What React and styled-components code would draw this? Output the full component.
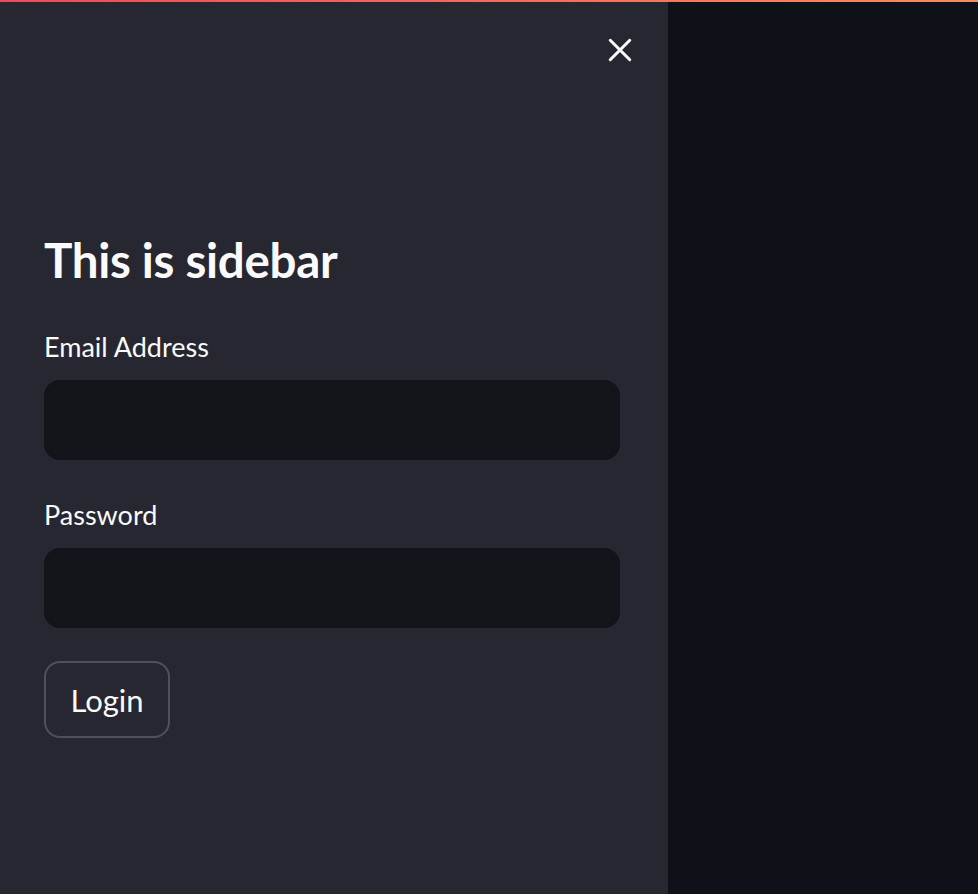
import React from "react";
import styled, { createGlobalStyle } from "styled-components";

const Global = createGlobalStyle`
  html, body { margin: 0; padding: 0; background: #0e1117; }
  body { font-family: "Lato", "Noto Sans", sans-serif; }
  #root { height: 894px; }
`;

const Page = styled.div`
  position: relative;
  display: flex;
  width: 978px;
  height: 894px;
  background: #0e1117;
  overflow: hidden;
`;

const Decoration = styled.div`
  position: absolute;
  top: 0;
  left: 0;
  right: 0;
  height: 2px;
  background: linear-gradient(90deg, #f04b55 0%, #f56a5c 50%, #f58c63 100%);
  z-index: 2;
`;

const Sidebar = styled.aside`
  width: 668px;
  flex-shrink: 0;
  background: #262730;
  display: flex;
  flex-direction: column;
  padding: 0 48px 0 44px;
  box-sizing: border-box;
`;

const TopRow = styled.div`
  display: flex;
  justify-content: flex-end;
  padding-top: 36px;
  margin-right: -14px;
  height: 64px;
  box-sizing: border-box;
`;

const CloseButton = styled.button`
  background: none;
  border: none;
  padding: 0;
  width: 28px;
  height: 28px;
  display: flex;
  align-items: center;
  justify-content: center;
  cursor: pointer;
`;

const Heading = styled.h1`
  margin: 167px 0 0;
  color: #fafafa;
  font-size: 47.5px;
  font-weight: 700;
  line-height: 57px;
  letter-spacing: -0.3px;
`;

const Field = styled.div`
  display: flex;
  flex-direction: column;
  margin-top: ${(p) => p.$top}px;
`;

const Label = styled.label`
  color: #fafafa;
  font-size: 27px;
  line-height: 34px;
  margin-bottom: 16px;
`;

const Input = styled.input`
  height: 80px;
  width: 576px;
  box-sizing: border-box;
  border: none;
  border-radius: 16px;
  background: #131419;
  color: #fafafa;
  outline: none;
  padding: 0 20px;
  font-size: 26px;
  font-family: inherit;
`;

const LoginButton = styled.button`
  margin-top: 33px;
  align-self: flex-start;
  width: 126px;
  height: 77px;
  border: 2px solid rgba(250, 250, 250, 0.2);
  border-radius: 16px;
  background: #262730;
  color: #fafafa;
  font-size: 31px;
  font-family: inherit;
  cursor: pointer;
`;

const Main = styled.main`
  flex: 1;
  background: #0e1117;
`;

export default function App() {
  return (
    <>
      <Global />
      <Page>
        <Decoration />
        <Sidebar>
          <TopRow>
            <CloseButton aria-label="Close">
              <svg width="26" height="26" viewBox="0 0 24 24" fill="none" stroke="#fafafa" strokeWidth="2.8" strokeLinecap="round">
                <path d="M3 3 L21 21 M21 3 L3 21" />
              </svg>
            </CloseButton>
          </TopRow>
          <Heading>This is sidebar</Heading>
          <Field $top={42}>
            <Label>Email Address</Label>
            <Input type="text" />
          </Field>
          <Field $top={38}>
            <Label>Password</Label>
            <Input type="password" />
          </Field>
          <LoginButton>Login</LoginButton>
        </Sidebar>
        <Main />
      </Page>
    </>
  );
}
